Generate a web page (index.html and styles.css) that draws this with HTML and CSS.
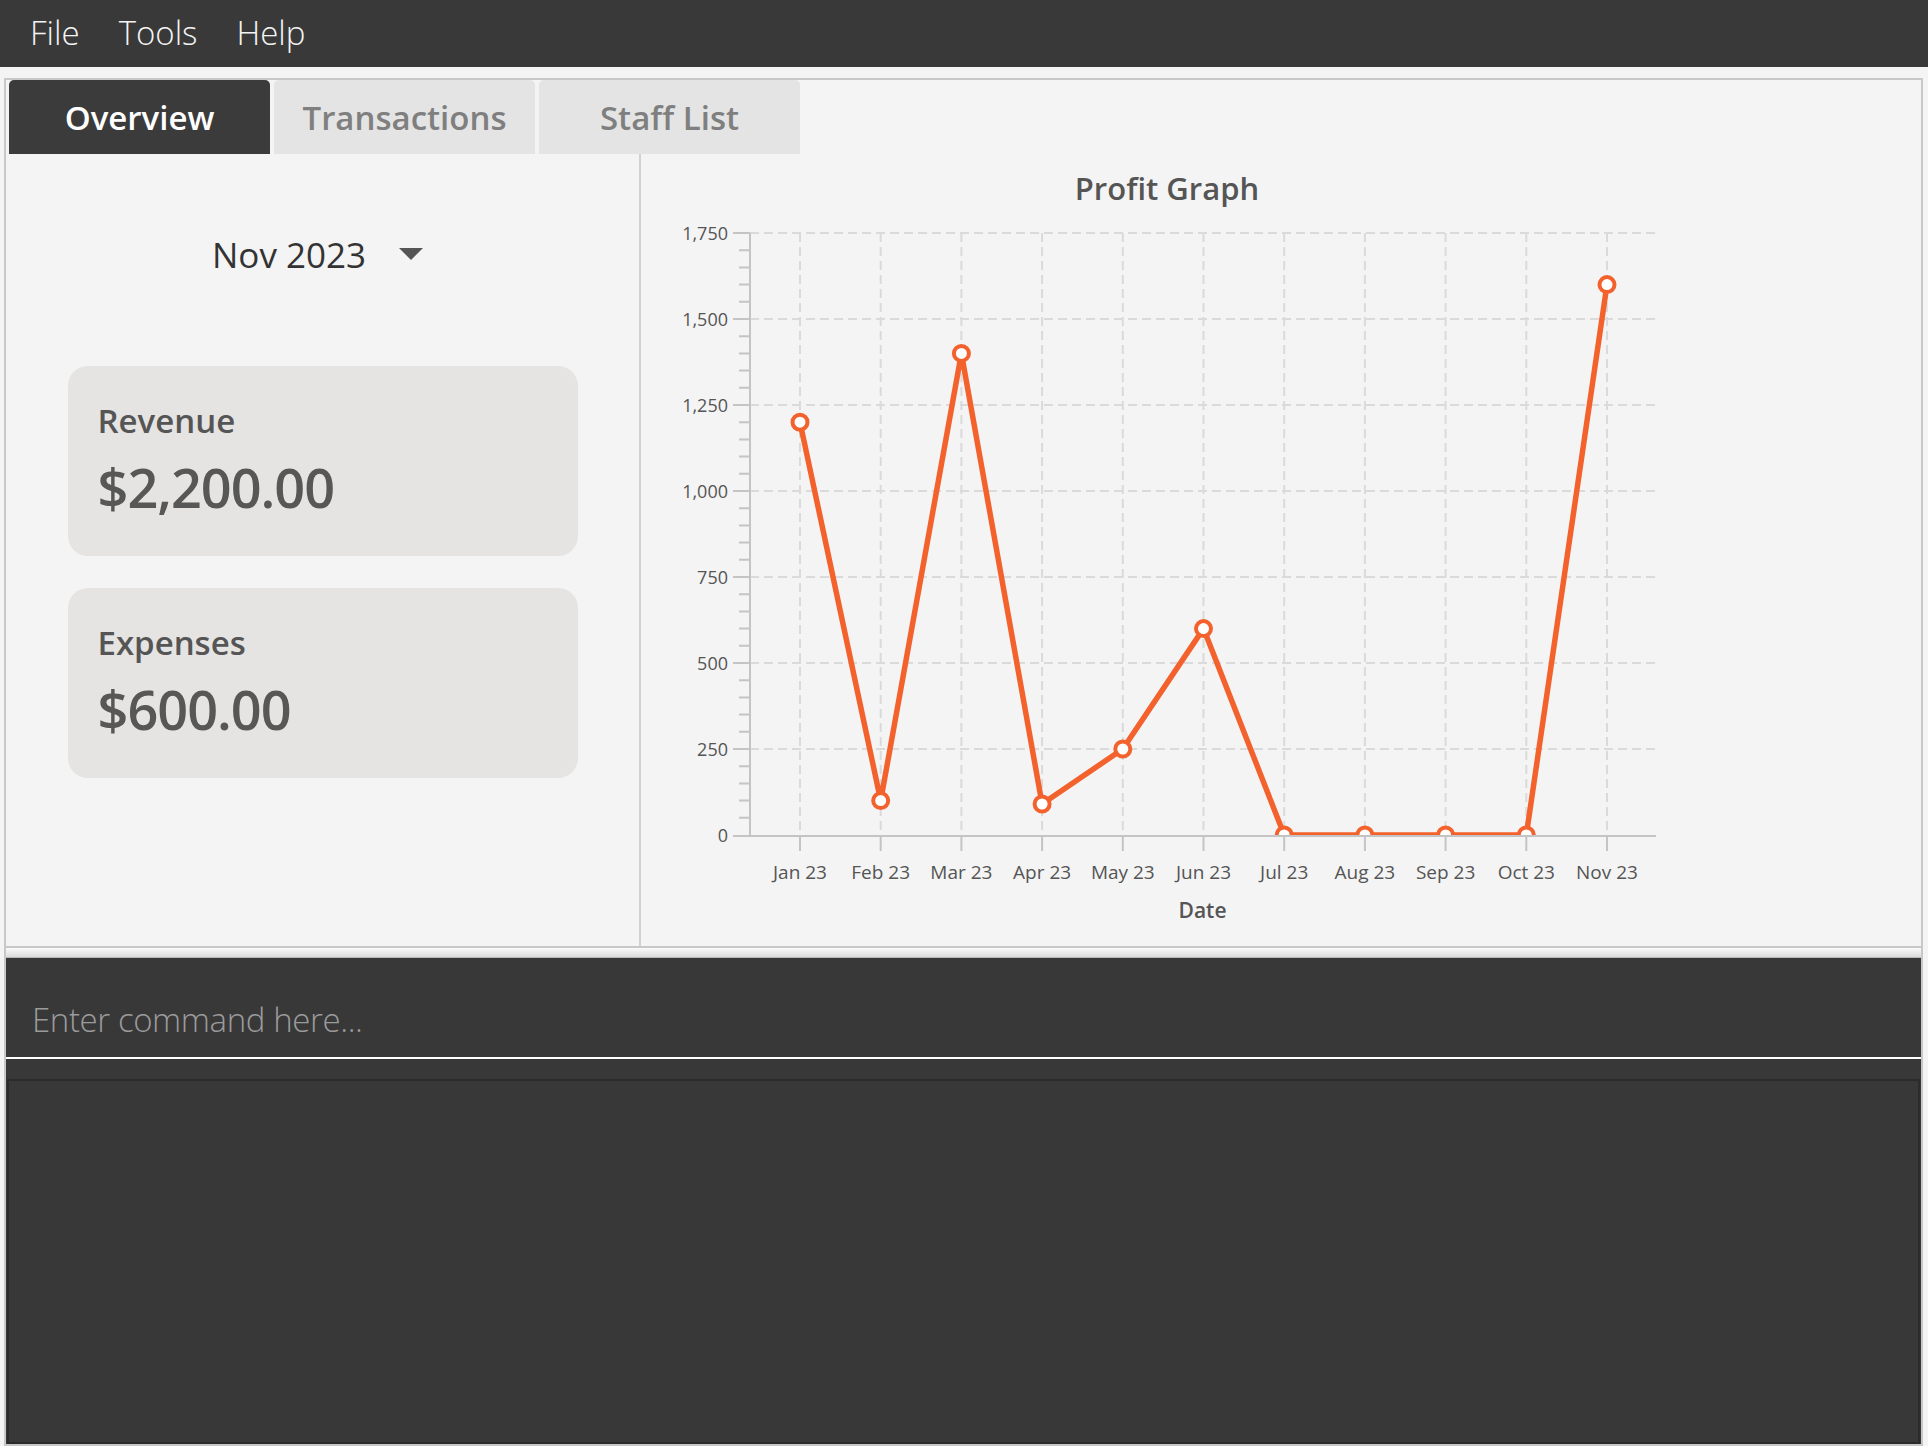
FILE: index.html
```html
<!DOCTYPE html>
<html lang="en">
<head>
<meta charset="utf-8">
<title>Overview</title>
<link rel="stylesheet" href="styles.css">
</head>
<body>
<div class="app">
  <nav class="menubar">
    <span class="menu-item">File</span>
    <span class="menu-item">Tools</span>
    <span class="menu-item">Help</span>
  </nav>
  <div class="main">
    <div class="frame">
      <section class="tabpane">
        <div class="tab-header">
          <div class="tab active">Overview</div>
          <div class="tab">Transactions</div>
          <div class="tab">Staff List</div>
        </div>
        <div class="tab-content">
          <aside class="summary">
            <div class="month-select">
              <span class="month-text">Nov 2023</span>
              <span class="arrow"></span>
            </div>
            <div class="cards">
              <div class="card">
                <div class="card-label">Revenue</div>
                <div class="card-value">$2,200.00</div>
              </div>
              <div class="card">
                <div class="card-label">Expenses</div>
                <div class="card-value">$600.00</div>
              </div>
            </div>
          </aside>
          <div class="chart-panel">
            <svg class="chart" width="1280" height="792" viewBox="0 0 1280 792">
              <defs>
                <clipPath id="plot-clip"><rect x="100" y="0" width="930" height="681"/></clipPath>
              </defs>
              <text class="chart-title" x="526" y="46" text-anchor="middle">Profit Graph</text>
              <path class="grid" d="M109 79H1015M109 165H1015M109 251H1015M109 337H1015M109 423H1015M109 509H1015M109 595H1015"/>
              <path class="grid" d="M159 79V681M239.7 79V681M320.4 79V681M401.1 79V681M481.8 79V681M562.5 79V681M643.2 79V681M723.9 79V681M804.6 79V681M885.3 79V681M966 79V681"/>
              <path class="tick" d="M92 79H109M92 165H109M92 251H109M92 337H109M92 423H109M92 509H109M92 595H109M92 682H109"/>
              <path class="tick" d="M98 663.8H109M98 646.6H109M98 629.4H109M98 612.2H109M98 577.8H109M98 560.6H109M98 543.4H109M98 526.2H109M98 491.8H109M98 474.6H109M98 457.4H109M98 440.2H109M98 405.8H109M98 388.6H109M98 371.4H109M98 354.2H109M98 319.8H109M98 302.6H109M98 285.4H109M98 268.2H109M98 233.8H109M98 216.6H109M98 199.4H109M98 182.2H109M98 147.8H109M98 130.6H109M98 113.4H109M98 96.2H109"/>
              <path class="tick" d="M159 683V697M239.7 683V697M320.4 683V697M401.1 683V697M481.8 683V697M562.5 683V697M643.2 683V697M723.9 683V697M804.6 683V697M885.3 683V697M966 683V697"/>
              <g class="y-labels" text-anchor="end">
                <text x="87" y="86">1,750</text>
                <text x="87" y="172">1,500</text>
                <text x="87" y="258">1,250</text>
                <text x="87" y="344">1,000</text>
                <text x="87" y="430">750</text>
                <text x="87" y="516">500</text>
                <text x="87" y="602">250</text>
                <text x="87" y="688">0</text>
              </g>
              <g class="x-labels" text-anchor="middle">
                <text x="159" y="725">Jan 23</text>
                <text x="239.7" y="725">Feb 23</text>
                <text x="320.4" y="725">Mar 23</text>
                <text x="401.1" y="725">Apr 23</text>
                <text x="481.8" y="725">May 23</text>
                <text x="562.5" y="725">Jun 23</text>
                <text x="643.2" y="725">Jul 23</text>
                <text x="723.9" y="725">Aug 23</text>
                <text x="804.6" y="725">Sep 23</text>
                <text x="885.3" y="725">Oct 23</text>
                <text x="966" y="725">Nov 23</text>
              </g>
              <text class="axis-title" x="561.5" y="764" text-anchor="middle">Date</text>
              <g clip-path="url(#plot-clip)">
                <polyline class="series" points="159,268.2 239.7,646.6 320.4,199.4 401.1,650 481.8,595 562.5,474.6 643.2,681 723.9,681 804.6,681 885.3,681 966,130.6"/>
                <g class="symbols">
                  <circle cx="159" cy="268.2" r="7.5"/>
                  <circle cx="239.7" cy="646.6" r="7.5"/>
                  <circle cx="320.4" cy="199.4" r="7.5"/>
                  <circle cx="401.1" cy="650" r="7.5"/>
                  <circle cx="481.8" cy="595" r="7.5"/>
                  <circle cx="562.5" cy="474.6" r="7.5"/>
                  <circle cx="643.2" cy="681" r="7.5"/>
                  <circle cx="723.9" cy="681" r="7.5"/>
                  <circle cx="804.6" cy="681" r="7.5"/>
                  <circle cx="885.3" cy="681" r="7.5"/>
                  <circle cx="966" cy="130.6" r="7.5"/>
                </g>
              </g>
              <path class="axis" d="M109 79V683M108 682H1015"/>
            </svg>
          </div>
        </div>
      </section>
      <div class="divider"></div>
      <section class="console">
        <input class="command-input" type="text" placeholder="Enter command here...">
        <div class="result"></div>
      </section>
    </div>
  </div>
</div>
</body>
</html>
```

FILE: styles.css
```css
* {
  box-sizing: border-box;
}

html, body {
  margin: 0;
  padding: 0;
}

body {
  font-family: "Open Sans", "Noto Sans", sans-serif;
  background: #f4f4f4;
}

.app {
  display: flex;
  flex-direction: column;
  height: 1446px;
  overflow: hidden;
}

/* ---------- menu bar ---------- */
.menubar {
  flex: none;
  height: 67px;
  background: #393939;
  display: flex;
  align-items: center;
  gap: 39px;
  padding: 0 0 2px 30px;
}

.menu-item {
  color: #f4f4f4;
  font-size: 33px;
  font-weight: 300;
  line-height: 45px;
}

/* ---------- main frame ---------- */
.main {
  flex: 1;
  min-height: 0;
  display: flex;
  padding: 11px 5px 0 4px;
}

.frame {
  flex: 1;
  display: flex;
  flex-direction: column;
  border: 2px solid #c8c8c8;
}

.tabpane {
  flex: none;
  height: 868px;
  display: flex;
  flex-direction: column;
  border-bottom: 2px solid #c8c8c8;
}

.tab-header {
  flex: none;
  height: 74px;
  display: flex;
  gap: 4px;
  padding-left: 3px;
}

.tab {
  width: 261px;
  height: 74px;
  border-radius: 5px 5px 0 0;
  background: #e4e4e4;
  color: #7f7f7f;
  font-size: 33px;
  font-weight: 600;
  display: flex;
  align-items: center;
  justify-content: center;
}

.tab.active {
  background: #3b3b3b;
  color: #ffffff;
}

.tab-content {
  flex: 1;
  min-height: 0;
  display: flex;
}

/* ---------- summary column ---------- */
.summary {
  flex: none;
  width: 635px;
  border-right: 2px solid #d2d2d2;
  display: flex;
  flex-direction: column;
  align-items: center;
  padding-top: 83px;
}

.month-select {
  display: flex;
  align-items: center;
  gap: 33px;
  margin-right: 10px;
}

.month-text {
  font-size: 35px;
  line-height: 35px;
  color: #333333;
}

.arrow {
  width: 0;
  height: 0;
  border-left: 12px solid transparent;
  border-right: 12px solid transparent;
  border-top: 12px solid #555555;
  margin-top: -2px;
}

.cards {
  margin-top: 94px;
  display: flex;
  flex-direction: column;
  gap: 32px;
}

.card {
  width: 510px;
  height: 190px;
  border-radius: 20px;
  background: #e5e4e2;
  padding: 38px 0 0 30px;
}

.card-label {
  font-size: 33px;
  line-height: 33px;
  font-weight: 600;
  color: #555555;
}

.card-value {
  margin-top: 23px;
  font-size: 54px;
  line-height: 54px;
  font-weight: 600;
  color: #575757;
  letter-spacing: -1px;
}

/* ---------- chart ---------- */
.chart-panel {
  flex: 1;
  min-width: 0;
}

.chart {
  display: block;
}

.chart-title {
  font-family: "Open Sans", "Noto Sans", sans-serif;
  font-size: 31px;
  font-weight: 600;
  fill: #555555;
}

.grid {
  fill: none;
  stroke: #dadada;
  stroke-width: 2;
  stroke-dasharray: 9 5;
}

.tick {
  fill: none;
  stroke: #c4c4c4;
  stroke-width: 2;
}

.axis {
  fill: none;
  stroke: #c4c4c4;
  stroke-width: 2;
}

.y-labels text,
.x-labels text {
  font-family: "Open Sans", "Noto Sans", sans-serif;
  font-size: 18px;
  fill: #555555;
}

.x-labels text {
  font-size: 19px;
}

.axis-title {
  font-family: "Open Sans", "Noto Sans", sans-serif;
  font-size: 21px;
  font-weight: 600;
  fill: #555555;
}

.series {
  fill: none;
  stroke: #f3622d;
  stroke-width: 5.5;
  stroke-linejoin: round;
}

.symbols circle {
  fill: #ffffff;
  stroke: #f3622d;
  stroke-width: 4;
}

/* ---------- divider ---------- */
.divider {
  flex: none;
  height: 10px;
  background: linear-gradient(#fbfbfb, #dcdcdc);
  border-bottom: 1px solid #b9b9b9;
}

/* ---------- console ---------- */
.console {
  flex: 1;
  min-height: 0;
  background: #383838;
  display: flex;
  flex-direction: column;
}

.command-input {
  flex: none;
  display: block;
  width: 100%;
  height: 101px;
  margin: 0;
  padding: 24px 0 0 26px;
  border: 0;
  border-bottom: 2px solid #ffffff;
  background: transparent;
  color: #ffffff;
  font-family: "Open Sans", "Noto Sans", sans-serif;
  font-size: 33px;
  font-weight: 300;
  letter-spacing: -0.4px;
  outline: none;
}

.command-input::placeholder {
  color: #9b9b9b;
  opacity: 1;
}

.result {
  flex: 1;
  margin: 20px 1px 0 1px;
  border: 2px solid #2b2b2b;
  background: #383838;
}
```
